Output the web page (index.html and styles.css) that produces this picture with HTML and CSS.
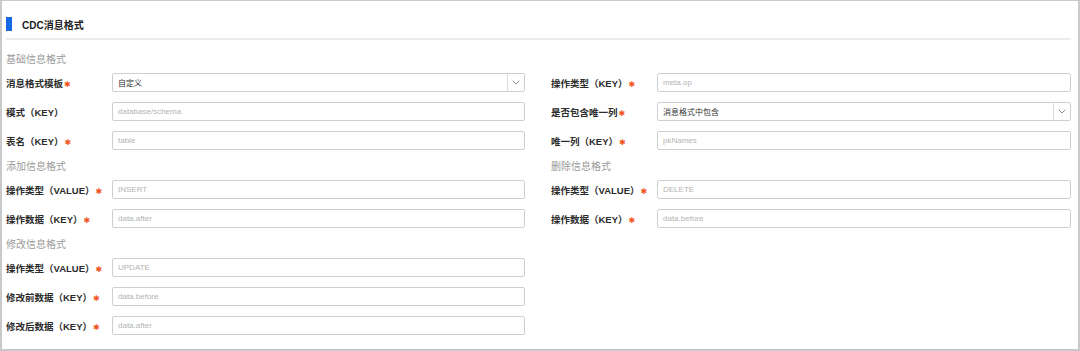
FILE: index.html
```html
<!DOCTYPE html>
<html lang="zh">
<head>
<meta charset="utf-8">
<title>CDC消息格式</title>
<link rel="stylesheet" href="styles.css">
</head>
<body>
<div class="panel">
  <div class="header">
    <span class="bar"></span>
    <span class="title">CDC消息格式</span>
  </div>
  <div class="form">
    <div class="section">基础信息格式</div>
    <div class="section"></div>

    <div class="row">
      <label class="label">消息格式模板<span class="req">✱</span></label>
      <div class="select"><span class="sel-text">自定义</span><span class="arrow"><svg width="8" height="5" viewBox="0 0 8 5"><path d="M0.8 0.8 L4 4 L7.2 0.8" fill="none" stroke="#8a8a8a" stroke-width="1"/></svg></span></div>
    </div>
    <div class="row">
      <label class="label">操作类型（KEY）<span class="req">✱</span></label>
      <input class="input" placeholder="meta.op">
    </div>

    <div class="row">
      <label class="label">模式（KEY）</label>
      <input class="input" placeholder="database/schema">
    </div>
    <div class="row">
      <label class="label">是否包含唯一列<span class="req">✱</span></label>
      <div class="select"><span class="sel-text">消息格式中包含</span><span class="arrow"><svg width="8" height="5" viewBox="0 0 8 5"><path d="M0.8 0.8 L4 4 L7.2 0.8" fill="none" stroke="#8a8a8a" stroke-width="1"/></svg></span></div>
    </div>

    <div class="row">
      <label class="label">表名（KEY）<span class="req">✱</span></label>
      <input class="input" placeholder="table">
    </div>
    <div class="row">
      <label class="label">唯一列（KEY）<span class="req">✱</span></label>
      <input class="input" placeholder="pkNames">
    </div>

    <div class="section">添加信息格式</div>
    <div class="section">删除信息格式</div>

    <div class="row">
      <label class="label">操作类型（VALUE）<span class="req">✱</span></label>
      <input class="input" placeholder="INSERT">
    </div>
    <div class="row">
      <label class="label">操作类型（VALUE）<span class="req">✱</span></label>
      <input class="input" placeholder="DELETE">
    </div>

    <div class="row">
      <label class="label">操作数据（KEY）<span class="req">✱</span></label>
      <input class="input" placeholder="data.after">
    </div>
    <div class="row">
      <label class="label">操作数据（KEY）<span class="req">✱</span></label>
      <input class="input" placeholder="data.before">
    </div>

    <div class="section">修改信息格式</div>
    <div class="section"></div>

    <div class="row">
      <label class="label">操作类型（VALUE）<span class="req">✱</span></label>
      <input class="input" placeholder="UPDATE">
    </div>
    <div class="row"></div>

    <div class="row">
      <label class="label">修改前数据（KEY）<span class="req">✱</span></label>
      <input class="input" placeholder="data.before">
    </div>
    <div class="row"></div>

    <div class="row">
      <label class="label">修改后数据（KEY）<span class="req">✱</span></label>
      <input class="input" placeholder="data.after">
    </div>
    <div class="row"></div>
  </div>
</div>
</body>
</html>
```

FILE: styles.css
```css
html, body {
  margin: 0;
  padding: 0;
  background: #ffffff;
}

body {
  font-family: "Liberation Sans", "Noto Sans CJK SC", sans-serif;
  color: #333333;
}

.panel {
  width: 1080px;
  height: 351px;
  box-sizing: border-box;
  border: 2px solid #c9c9c9;
  border-top-width: 1px;
  padding: 0 7px 0 4px;
  background: #ffffff;
}

.header {
  display: flex;
  align-items: center;
  height: 28px;
  padding-top: 9px;
  border-bottom: 2px solid #ececec;
}

.bar {
  width: 6px;
  height: 14px;
  background: #1668e3;
}

.title {
  margin-left: 10px;
  font-size: 10px;
  font-weight: bold;
  color: #222222;
}

.form {
  display: grid;
  grid-template-columns: 519px 520px;
  column-gap: 26px;
  padding-top: 8px;
}

.section {
  height: 20px;
  line-height: 23px;
  font-size: 10px;
  color: #9a9a9a;
}

.row {
  display: flex;
  align-items: center;
  height: 29px;
}

.label {
  width: 106px;
  flex: none;
  font-size: 9.5px;
  font-weight: bold;
  color: #2b2b2b;
  white-space: nowrap;
}

.req {
  display: inline-block;
  margin-left: 1px;
  font-family: "DejaVu Sans", sans-serif;
  font-size: 8px;
  font-weight: normal;
  color: #f0561f;
}

.input,
.select {
  flex: 1;
  min-width: 0;
  height: 19px;
  box-sizing: border-box;
  border: 1px solid #cfcfcf;
  border-radius: 2px;
  background: #ffffff;
  font-family: "Liberation Sans", "Noto Sans CJK SC", sans-serif;
  font-size: 8px;
  color: #333333;
  padding: 0 0 0 5px;
  outline: none;
  margin: 0;
}

.input::placeholder {
  color: #b3b3b3;
}

.select {
  display: flex;
  align-items: center;
}

.sel-text {
  flex: 1;
}

.arrow {
  width: 16px;
  height: 100%;
  display: flex;
  align-items: center;
  justify-content: center;
  border-left: 1px solid #dcdcdc;
}
```
